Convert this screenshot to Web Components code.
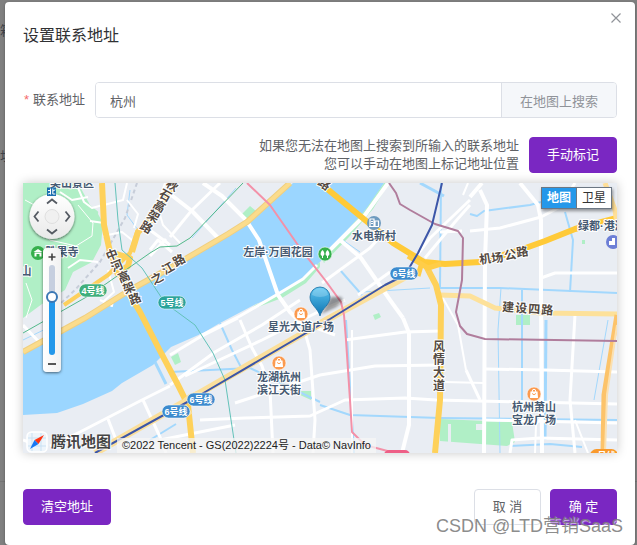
<!DOCTYPE html>
<html lang="zh-CN">
<head>
<meta charset="utf-8">
<title>设置联系地址</title>
<style>
  html, body { margin: 0; height: 100%; }
  body {
    background: #808080;
    font-family: "Liberation Sans", "Noto Sans CJK SC", sans-serif;
    font-size: 13px;
    color: #606266;
    --brand: #7a27c2;
    --line: #dcdfe6;
    overflow: hidden;
  }
</style>
</head>
<body>
<address-page></address-page>

<script>
const define = (name, html, setup) => {
  const template = document.createElement('template');
  template.innerHTML = html;
  customElements.define(name, class extends HTMLElement {
    constructor() {
      super();
      this.attachShadow({ mode: 'open' }).append(template.content.cloneNode(true));
      if (setup) setup.call(this, this.shadowRoot);
    }
  });
};

define('ui-button', `
  <style>
    :host { display: inline-flex; }
    button {
      font: inherit; line-height: 18px; color: #fff; background: var(--brand);
      border: 1px solid var(--brand); border-radius: 4px; min-width: 67px;
      padding: 8px 17px; cursor: pointer; white-space: nowrap;
    }
    :host([kind=plain]) button { background: #fff; border-color: var(--line); color: #606266; }
  </style>
  <button type="button"><slot></slot></button>`);

define('dialog-close', `
  <style>
    :host { position: absolute; top: 9px; right: 12px; }
    button { display: flex; border: 0; background: none; padding: 0; cursor: pointer; }
  </style>
  <button type="button" aria-label="关闭">
    <svg width="14" height="14" viewBox="0 0 14 14" fill="none" stroke="#909399" stroke-width="1.2"><path d="M2.5 2.5l9 9M11.5 2.5l-9 9"/></svg>
  </button>`);

define('address-field', `
  <style>
    :host { display: flex; align-items: stretch; gap: 10px; }
    label { flex: none; min-width: 62px; text-align: right; line-height: 36px; }
    label span { color: #f56c6c; margin-right: 4px; }
    .group { flex: 1; display: flex; border: 1px solid var(--line); border-radius: 4px; overflow: hidden; }
    input { flex: 1; min-width: 0; border: 0; outline: 0; padding: 0 14px; font: inherit; color: #606266; height: 34px; }
    button { font: inherit; color: #909399; background: #f5f7fa; border: 0; border-left: 1px solid var(--line); padding: 0 18px; cursor: pointer; }
  </style>
  <label for="address"><span>*</span>联系地址</label>
  <div class="group">
    <input id="address" type="text" value="杭州" required>
    <button type="button">在地图上搜索</button>
  </div>`);

define('map-pan', `
  <style>
    :host { display: block; width: 48px; height: 58px; }
    svg { display: block; overflow: visible; }
  </style>
  <svg width="48" height="58" viewBox="28 186 48 58" role="group" aria-label="平移地图">
    <defs>
      <linearGradient id="g" x1="0" y1="0" x2="0" y2="1"><stop offset="0" stop-color="#fff"/><stop offset="1" stop-color="#e9e9e9"/></linearGradient>
      <filter id="s" x="-20%" y="-20%" width="140%" height="150%"><feDropShadow dx="0" dy="1" stdDeviation="1.5" flood-opacity=".6"/></filter>
    </defs>
    <circle cx="52" cy="216.500" r="22.500" fill="url(#g)" filter="url(#s)"/>
    <rect x="47" y="187.500" width="9" height="8.500" fill="#1c6fb0"/>
    <path d="M48 190.500h2.500M50.500 188.500v6M48 194l2.500-1M52.800 188.500v5.500h2.500M52.800 191l2.500-1.200" stroke="#fff" fill="none"/>
    <circle cx="52" cy="216.500" r="7" fill="#f0f0f0" stroke="#dfdfdf"/>
    <g fill="none" stroke="#555b63" stroke-width="1.800">
      <path d="M47 203.500l5-4 5 4M47 229.500l5 4 5-4M38.500 211.500l-4 5 4 5M65.500 211.500l4 5-4 5"/>
    </g>
  </svg>`);

define('map-zoom', `
  <style>
    :host {
      display: flex; flex-direction: column; align-items: center; width: 18px;
      background: linear-gradient(90deg, #fff, #f1f1f1); border-radius: 4px;
      box-shadow: 0 1px 3px rgba(0,0,0,.55);
    }
    button { display: flex; width: 18px; height: 17px; border: 0; padding: 0; background: none; align-items: center; justify-content: center; cursor: pointer; }
    input {
      appearance: none; writing-mode: vertical-lr; direction: rtl; margin: 0;
      width: 14px; height: 90px; background: none;
    }
    input::-webkit-slider-runnable-track {
      width: 6px; border-radius: 3px;
      background: linear-gradient(#c6cfdf 35%, #2498ea 35%);
    }
    input::-webkit-slider-thumb {
      appearance: none; width: 12px; height: 12px; margin-left: -3px; border-radius: 50%;
      background: #fff; border: 2px solid #3c78b4; box-sizing: border-box;
    }
  </style>
  <button type="button" aria-label="放大"><svg width="10" height="10" viewBox="0 0 10 10" stroke="#444" stroke-width="1.600"><path d="M1.500 5h7M5 1.500v7"/></svg></button>
  <input type="range" min="0" max="100" value="67" aria-label="缩放级别">
  <button type="button" aria-label="缩小"><svg width="10" height="10" viewBox="0 0 10 10" stroke="#444" stroke-width="1.800"><path d="M1 5h8"/></svg></button>`);

define('map-type', `
  <style>
    :host { display: flex; border: 1px solid #6c7783; box-shadow: 1px 2px 3px rgba(0,0,0,.4); }
    button { font: inherit; font-size: 12px; line-height: 20px; padding: 0 5px; border: 0; background: #fff; color: #333; cursor: pointer; }
    button[aria-pressed=true] { background: #2498ea; color: #fff; font-weight: bold; }
    button + button { border-left: 1px solid #6c7783; }
  </style>
  <button type="button" aria-pressed="true">地图</button><button type="button" aria-pressed="false">卫星</button>`);

define('map-credit', `
  <style>
    :host { display: flex; align-items: flex-end; gap: 6px; }
    .brand { display: flex; align-items: center; gap: 3px; font-size: 15px; line-height: 20px; font-weight: bold; color: #444; text-shadow: 0 0 2px #fff, 0 0 2px #fff, 1px 1px 1px #fff; }
    small { font-size: 11px; line-height: 15px; color: #222; background: rgba(245,245,245,.75); padding: 0 5px; white-space: nowrap; }
    svg { display: block; }
  </style>
  <span class="brand">
    <svg width="22" height="22" viewBox="0 0 22 22">
      <rect x="1" y="1" width="20" height="20" rx="4.500" fill="#eef5fb" stroke="#fff" stroke-width="1.500"/>
      <path d="M6 2v18M15 2v18M2 7h18M2 15h18" stroke="#c9e1f3" fill="none"/>
      <path d="M18 4L8.500 9l4 4z" fill="#ff3412"/><path d="M4 18l4.500-9 4 4z" fill="#1878f4"/>
    </svg>腾讯地图</span>
  <small>©2022 Tencent - GS(2022)2224号 - Data© NavInfo</small>`);

/* Map drawing */
const road = (d, w = 3, c = '#fff') => `<path d="M${d}" stroke="${c}" stroke-width="${w}"/>`;

const streets = [
  // north-west bank
  ['165 183L157 205 163 225 180 243', 2], ['203 183L222 196 246 220', 4], ['170 194L192 211 218 238', 4],
  ['170 237L192 210 220 183', 3], ['150 250L158 240 172 252', 3], ['104 205L123 200 127 183', 2],
  ['127 200L138 214 134 228', 2], ['103 236L122 232 132 240', 2], ['150 230L170 245', 3],
  ['166 239L150 256', 3], ['100 300L112 306 113 300', 2], ['108 270L114 292 103 302', 2],
  // bridge and south bank
  ['246 220L259 240 278 295 290 312 300 322', 4], ['317 265L303 279 278 294 240 316 200 336', 3],
  ['388 183L365 215 322 258', 4], ['322 283L370 248 380 237', 3], ['340 240L361 258 390 300 403 318', 4],
  ['358 295L390 272', 3], ['345 300L322 310 262 340 185 376', 3], ['300 322L335 335', 3],
  ['240 320L252 348 262 366 270 390 273 453', 3], ['170 385L215 352 262 325 300 300', 3],
  ['170 355L200 337 238 318', 3], ['235 403L290 385 320 375 375 366 440 365', 3],
  ['200 420L245 418 310 416 345 400 405 398 436 400 617 404', 3], ['345 340L405 332 440 331', 3],
  ['302 322L310 350 315 420 313 453', 3], ['403 318L409 333 409 425 402 453', 4],
  ['170 386L140 401 80 432 50 446', 3], ['143 400L160 437 166 453', 3], ['108 419L118 445', 3],
  ['160 440L235 425', 3], ['352 330L352 453', 2],
  // east grid
  ['470 205L455 222 425 258', 3], ['470 197L482 183', 4], ['480 190L487 205 485 260 484 453', 4],
  ['520 183L538 205 541 220 541 300 542 453', 4], ['470 231L500 228 541 217 560 207 575 183', 3],
  ['541 278L555 273 617 273', 3], ['466 370L480 400', 3], ['486 369L545 370 617 372', 3],
  ['440 293L458 325 466 370', 2],
  ['575 315L570 400 575 453', 3], ['445 382L484 383', 2], ['510 453L512 440 540 438 617 440', 3],
  ['535 453L536 425 550 400', 2], ['440 232L462 231', 3],
  ['468 183L463 195', 2], ['412 262L430 238 470 200', 3], ['575 420L588 453', 2],
  ['484 420L617 423', 3],
  ['23 440L42 447', 3], ['23 325L40 343', 3],
  // park paths
  ['25 200L40 208 37 225 50 240 76 246 92 236 93 223 78 205', 1], ['76 183L84 202 92 208 103 205', 2],
  ['60 192L72 200 88 197', 2], ['26 318L32 300 26 283', 1], ['68 268L80 260 98 262', 2], ['90 221L104 223', 2]
];

const brooks = [
  ['470 214L477 216 484 211 530 205 541 202', 2], ['565 212L573 240 570 292', 2],
  ['441 183L440 288', 2], ['440 288L500 288 617 293', 2], ['362 292L430 288', 1], ['501 288L498 330 500 453', 1],
  ['522 290L522 400', 2], ['546 320L545 440', 3], ['440 418L617 420', 2], ['320 405L350 415 440 418', 2],
  ['170 372L250 368 320 402', 2], ['220 323L232 350 243 371', 2], ['346 320L354 453', 2],
  ['155 362L166 384', 3], ['150 440L176 424', 2], ['510 446L550 444 582 447', 2],
  ['130 190L127 215 138 230', 1], ['192 238L236 188', 1], ['340 270L362 295', 2],
  ['340 238L360 252', 1], ['608 320L594 400', 1], ['420 183L444 196', 3], ['23 340L60 322', 1]
];

// Each road name: characters with the centre of each one, and the tilt of the glyphs.
const roadNames = [
  ['中河高架路', [[112,255],[117,266],[124,277],[129,288],[135,299]], -22],
  ['秋石高架路', [[172,186],[165,196],[159,207],[153,217],[146,228]], 30],
  ['之江路', [[157,279],[168,269],[179,261]], -30],
  ['机场公路', [[485,259],[497,258],[510,255],[522,252]], -9],
  ['建设四路', [[508,307],[521,308],[534,309],[547,310]], 3],
  ['风情大道', [[439,347],[439,360],[439,373],[439,386]], 0],
  ['路', [[324,184]], 35]
];
const nameText = ([chars, at, tilt]) => {
  const a = tilt * Math.PI / 180, hx = 6, hy = 4;
  const xs = at.map(([x, y]) => Math.round(x - hx * Math.cos(a) - hy * Math.sin(a)));
  const ys = at.map(([x, y]) => Math.round(y - hx * Math.sin(a) + hy * Math.cos(a)));
  return `<text class="road" x="${xs.join(' ')}" y="${ys.join(' ')}" rotate="${tilt}">${chars}</text>`;
};

const lineBadge = (n, x, y, c) => `
  <g transform="translate(${x} ${y})"><rect x="-14" y="-6" width="28" height="13" rx="6.500" fill="${c}" stroke="#fff" stroke-opacity=".5"/>
  <text class="badge" y="4">${n}号线</text></g>`;

const bag = (x, y) => `<g transform="translate(${x} ${y})"><circle r="7" fill="#fb9a4f" stroke="#fff" stroke-width=".6"/>
  <path d="M-3.500-2.500h7l.5 6.500h-8z" fill="#fff"/><path d="M-1.700-2v-1a1.700 1.700 0 013.400 0v1" fill="none" stroke="#fff"/><path d="M-1.500-.8a1.500 1.500 0 003 0" fill="none" stroke="#fb9a4f" stroke-width=".9"/></g>`;

define('map-canvas', `
  <style>
    :host { display: block; }
    svg { display: block; width: 100%; height: 100%; }
    text { font-family: "Liberation Sans", "Noto Sans CJK SC", sans-serif; paint-order: stroke; stroke-linejoin: round; }
    .road { font-size: 12px; font-weight: bold; fill: #544a42; stroke: #fff; stroke-width: 2px; }
    .place { font-size: 11px; font-weight: bold; fill: #465a72; stroke: #fff; stroke-width: 2px; text-anchor: middle; }
    .badge { font-size: 9px; font-weight: bold; fill: #fff; text-anchor: middle; }
  </style>
  <svg viewBox="23 183 594 270" preserveAspectRatio="xMidYMid slice" role="img" aria-label="杭州地图">
    <defs>
      <linearGradient id="pin" x1="0" y1="0" x2="0" y2="1"><stop offset="0" stop-color="#5cc6f2"/><stop offset="1" stop-color="#0e73b0"/></linearGradient>
      <filter id="soft" x="-50%" y="-50%" width="200%" height="200%"><feGaussianBlur stdDeviation="1.500"/></filter>
    </defs>
    <rect x="23" y="183" width="594" height="270" fill="#e9edf3"/>
    <path fill="#b0efc6" d="M23 183H83L90 190 100 194 98 214 103 223 101 245 92 262 73 272 65 290 42 304 23 318z"/>
    <path fill="#e9edf3" d="M78 183L102 183 101 214 90 205z"/>
    <path fill="#9bd6ff" d="M23 352L85 318 130 290 170 270 243 226 293 183H384L369 206 345 233 320 262 303 280 284 293 256 304 220 323 203 333 171 347 153 365 122 383 112 391 83 404 57 413 23 415z"/>
    <g fill="#b0efc6">
      <path d="M384 183l-18 26-44 50 2 4 25-26 24-28 16-26zM320 262l-17 16-20 15-28 12-5 5 32-12 24-15 14-16z"/>
      <path d="M242 214l8-8 6 5-9 8zM171 357l7-4 3 9-6 3zM440 419l72 3 3 20-8 4-67-5zM300 391h11v9l-11-5zM373 315l6-2 2 4-6 3zM516 315h14v10h-14zM582 240h3v4h-3z"/>
    </g>
    <path fill="#e9edf3" d="M448 424h3v20h-3zM476 424h8v6h-8z"/>
    <g fill="none" stroke-linejoin="round">
      ${brooks.map(([d, w]) => road(d, w, '#a3d8fd')).join('')}
      <g stroke-dasharray="4 3">${road('137 183L125 218 100 262 75 290 45 318', 2, '#c7cdd9')}</g>
      ${streets.map(([d, w]) => road(d, w)).join('')}
      ${road('290 183L247 222 228 234 170 268 130 290 85 318 23 352', 6, '#efcf80')}
      ${road('290 183L247 222 228 234 170 268 130 290 85 318 23 352', 4, '#fbdc8c')}
      ${road('170 185L152 217 137 232 130 253 108 275 64 305', 4, '#fdd05c')}
      ${road('174 183L154 217 138 232 132 252', 6, '#fdd05c')}
      ${road('405 277L330 318 200 393 95 453', 7, '#fbdf9b')}
      ${road('440 295L470 296 495 308 540 313 617 314', 5, '#fde19a')}
      ${road('102 183L104 225 110 252 128 292 140 312 158 347 178 385 188 405 193 453', 6, '#fed15a')}
      ${road('110 252L130 258 128 266 115 275', 6, '#fed15a')}
      ${road('424 262L436 285 441 305 440 400 435 453', 6, '#fed15a')}
      ${road('320 183L348 206 393 243 424 262 445 264 480 262 520 250 545 241 575 229 617 218', 6, '#ffca38')}
      ${road('408 256L428 268 441 264M418 276L422 262', 5, '#ffcd48')}
      ${road('190 415L182 404 190 397 200 393', 6, '#fbdf9b')}
      ${road('605 183L615 210 617 225', 5, '#ffdf98')}
      ${road('617 315L604 395 603 453', 5, '#fcc36a')}
      ${road('617 325L607 395 605 453', 2, '#fbe0b0')}
      ${road('23 333L90 295 150 253 160 247 177 246 190 238 243 183', 1, '#53b98a')}
      ${road('115 183L118 220 122 250 142 268 165 303 195 325 213 353 225 380 236 453', 1, '#63c2b9')}
      ${road('247 183L270 205 300 248 325 280 341 302 344 315 346 340 350 400 352 432 365 445 395 453', 2, '#f391a8')}
      ${road('389 183L396 193 400 204 410 210 435 224 458 231 463 238 462 280 456 312 460 326 467 334 485 339 617 341', 2, '#b07d9c')}
      ${road('442 183L432 225 418 253 405 275 385 285 330 319 200 395 95 453', 2, '#3c56a8')}
    </g>
    ${roadNames.map(nameText).join('')}
    <text class="place" x="72" y="187">吴山景区</text>
    <text class="place" x="62" y="256">胜果寺</text>
    <text class="place" x="26" y="275">山</text>
    <text class="place" x="278" y="256">左岸·万国花园</text>
    <text class="place" x="374" y="240">水电新村</text>
    <text class="place" x="301" y="331">星光大道广场</text>
    <text class="place" x="279" y="381">龙湖杭州</text>
    <text class="place" x="279" y="394">滨江天街</text>
    <text class="place" x="534" y="411">杭州萧山</text>
    <text class="place" x="534" y="424">宝龙广场</text>
    <text class="place" style="text-anchor:start" x="578" y="230">绿都·港湾</text>
    ${lineBadge(4, 93, 290, '#3fae7b')}
    ${lineBadge(5, 172, 302, '#2aa39a')}
    ${lineBadge(6, 404, 273, '#3c8bce')}
    ${lineBadge(6, 201, 399, '#3c8bce')}
    ${lineBadge(6, 176, 411, '#3c8bce')}
    <rect x="384" y="450" width="26" height="10" rx="5" fill="#ee5f86"/>
    <g transform="translate(604 455)"><rect x="-14" y="-6" width="28" height="13" rx="6.500" fill="#f99a2c"/><text class="badge" y="4">2号线</text></g>
    ${bag(301, 314)}${bag(279, 363)}${bag(534, 394)}
    <circle cx="38" cy="253" r="7" fill="#35b04c"/><path d="M33.500 252l4.500-3 4.500 3zM34.500 252.500h7v4h-2v-2.500h-3v2.500h-2z" fill="#fff"/>
    <circle cx="325" cy="254" r="7" fill="#35b04c" stroke="#fff" stroke-width=".6"/>
    <path d="M322.500 250c3 3 2 6 0 6s-3-3 0-6zM327.500 250c3 3 2 6 0 6s-3-3 0-6z" fill="#fff"/><path d="M322.500 254v4M327.500 254v4" stroke="#fff"/>
    <circle cx="374" cy="223" r="7" fill="#6f9bbf"/><path d="M370 226v-7h4v7M375 226v-5h3.500v5M369 226.500h10" fill="none" stroke="#fff" stroke-width="1.200"/><path d="M371 221.500h2M371 223.500h2" stroke="#fff"/>
    <circle cx="613" cy="242" r="7" fill="#6d7fd6"/><path d="M609 245v-4h3v-3h3v7z" fill="#fff"/>
    <path d="M321 314L331 297 341 297 343 301 336 307z" fill="#000" opacity=".4" filter="url(#soft)"/>
    <path d="M320 316C318 308 310 305 310 297a10 10 0 0120 0C330 305 322 308 320 316z" fill="url(#pin)" stroke="#1a6fa3" stroke-width=".8"/>
    <path d="M312 295a8 7 0 0116 0q-8 4-16 0z" fill="#fff" opacity=".22"/>
  </svg>`);

define('map-view', `
  <style>
    :host { display: block; position: relative; aspect-ratio: 594 / 270; box-shadow: 0 0 10px rgba(0,0,0,.22); }
    map-canvas { height: 100%; }
    map-pan { position: absolute; left: 5px; top: 3px; }
    map-zoom { position: absolute; left: 20px; top: 65px; }
    map-type { position: absolute; right: 5px; top: 4px; }
    map-credit { position: absolute; left: 3px; bottom: 0; }
  </style>
  <map-canvas></map-canvas><map-pan></map-pan><map-zoom></map-zoom><map-type></map-type><map-credit></map-credit>`);

define('address-dialog', `
  <style>
    :host {
      display: flex; flex-direction: column; position: relative; box-sizing: border-box;
      background: #fff; border-radius: 4px; padding: 23px 18px 20px; box-shadow: 0 1px 3px rgba(0,0,0,.3);
    }
    h1 { margin: 0 0 35px; font-size: 16px; line-height: 22px; font-weight: normal; color: #303133; }
    .hint { display: flex; justify-content: flex-end; align-items: center; gap: 10px; margin: 19px 0 10px; }
    p { margin: 0; line-height: 18px; text-align: right; }
    footer { display: flex; gap: 9px; margin-top: 36px; }
    footer :first-child { margin-right: auto; }
  </style>
  <h1><slot name="title"></slot></h1>
  <dialog-close></dialog-close>
  <address-field></address-field>
  <div class="hint">
    <p>如果您无法在地图上搜索到所输入的联系地址<br>您可以手动在地图上标记地址位置</p>
    <ui-button>手动标记</ui-button>
  </div>
  <map-view></map-view>
  <footer>
    <ui-button>清空地址</ui-button>
    <ui-button kind="plain">取 消</ui-button>
    <ui-button>确 定</ui-button>
  </footer>`);

define('page-mark', `
  <style>
    :host {
      position: absolute; right: 14px; bottom: 6px; font-size: 18px; line-height: 26px;
      color: rgba(125,125,125,.9); text-shadow: 1px 1px 1px rgba(255,255,255,.7); pointer-events: none; white-space: nowrap;
    }
  </style>
  <slot></slot>`);

define('address-page', `
  <style>
    :host { display: grid; grid-template-columns: 5px 1fr 2px; position: relative; min-height: 100%; align-content: start; }
    .behind { overflow: hidden; color: #40434a; padding-top: 21px; line-height: 20px; white-space: nowrap; }
    .behind div + div { margin-top: 106px; }
    .rule { position: absolute; left: 0; right: 0; top: 481px; border-top: 1px solid #747474; }
    address-dialog { margin-top: 2px; }
  </style>
  <div class="rule"></div>
  <div class="behind" aria-hidden="true"><div>箱</div><div>址</div></div>
  <address-dialog><span slot="title">设置联系地址</span></address-dialog>
  <page-mark>CSDN @LTD营销SaaS</page-mark>`);
</script>
</body>
</html>
